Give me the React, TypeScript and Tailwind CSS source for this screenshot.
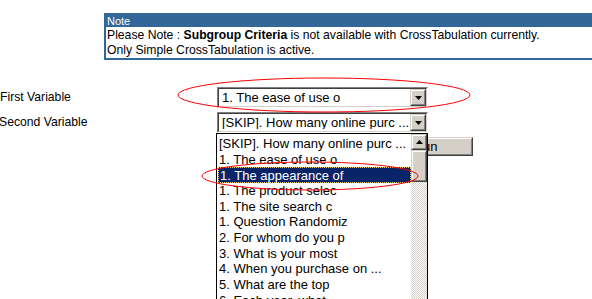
const items = [
  "[SKIP]. How many online purc ...",
  "1. The ease of use o",
  "1. The appearance of",
  "1. The product selec",
  "1. The site search c",
  "1. Question Randomiz",
  "2. For whom do you p",
  "3. What is your most",
  "4. When you purchase on ...",
  "5. What are the top",
  "6. Each year, what",
];

function Arrow({ up }: { up?: boolean }) {
  return (
    <svg width="7" height="4" viewBox="0 0 7 4">
      <path d={up ? "M3.5 0 L7 4 L0 4 Z" : "M0 0 L7 0 L3.5 4 Z"} fill="#000" />
    </svg>
  );
}

function RaisedBox({ className, children }: { className?: string; children?: React.ReactNode }) {
  return (
    <div className={`border border-t-[#d4d0c8] border-l-[#d4d0c8] border-r-[#404040] border-b-[#404040] bg-[#d4d0c8] ${className ?? ""}`}>
      <div className="flex h-full w-full items-center justify-center border border-t-white border-l-white border-r-[#808080] border-b-[#808080]">
        {children}
      </div>
    </div>
  );
}

function Select({ value }: { value: string }) {
  return (
    <div className="h-[21px] w-[211px] border border-t-[#808080] border-l-[#808080] border-r-white border-b-white">
      <div className="flex h-full w-full items-center border border-t-[#404040] border-l-[#404040] border-r-[#d4d0c8] border-b-[#d4d0c8] bg-white">
        <span className="flex-1 truncate pl-[3px] text-[13px] leading-none text-black">{value}</span>
        <RaisedBox className="h-[17px] w-[16px]">
          <Arrow />
        </RaisedBox>
      </div>
    </div>
  );
}

export default function App() {
  return (
    <div
      className="relative h-[299px] w-[592px] overflow-hidden bg-white text-[13px] text-black"
      style={{ fontFamily: '"Liberation Sans", Arial, sans-serif' }}
    >
      <div className="ml-[104px] mt-[13px] border-2 border-r-0 border-[#336699]">
        <div className="h-[12px] bg-[#336699] pl-[1px] text-[11px] leading-[12px] text-white">Note</div>
        <div className="pl-[1px] pt-[1px] text-[12.2px] leading-[15px]">
          <div>
            Please Note : <b>Subgroup Criteria</b> is not available with CrossTabulation currently.
          </div>
          <div>Only Simple CrossTabulation is active.</div>
        </div>
      </div>

      <div className="mt-[27px] flex items-center">
        <div className="-ml-[1px] w-[218px] pl-[1px] text-[12.2px]">First Variable</div>
        <Select value="1. The ease of use o" />
      </div>
      <div className="mt-[4px] flex items-center">
        <div className="-ml-[1px] w-[218px] text-[12.2px]">Second Variable</div>
        <Select value="[SKIP]. How many online purc ..." />
      </div>
      <div className="mt-[4px] flex">
        <RaisedBox className="ml-[378px] h-[19px] w-[95px]">
          <span className="leading-none">Run</span>
        </RaisedBox>
      </div>

      <div className="absolute left-[216px] top-[133px] flex h-[180px] w-[212px] border border-black bg-white">
        <div className="flex-1 pl-[1px] pt-[2px]">
          {items.map((it, i) => (
            <div
              key={i}
              className={`h-[15.67px] whitespace-nowrap pl-[1px] leading-[15.67px] ${
                i === 2 ? "border border-dotted border-[#e8d060] bg-[#0a246a] pl-0 leading-[13.67px] text-white" : ""
              }`}
            >
              {it}
            </div>
          ))}
        </div>
        <div className="flex w-[16px] flex-col bg-[repeating-conic-gradient(#d4d0c8_0_25%,#ffffff_0_50%)] bg-[length:2px_2px]">
          <RaisedBox className="h-[16px] w-[16px]">
            <Arrow up />
          </RaisedBox>
          <RaisedBox className="h-[32px] w-[16px]" />
        </div>
      </div>

      <svg className="pointer-events-none absolute inset-0" width="592" height="299">
        <ellipse cx="324" cy="95" rx="146" ry="17" fill="none" stroke="#ff0000" strokeWidth="1" />
        <ellipse cx="310" cy="176" rx="108" ry="14" fill="none" stroke="#ff0000" strokeWidth="1" />
      </svg>
    </div>
  );
}
